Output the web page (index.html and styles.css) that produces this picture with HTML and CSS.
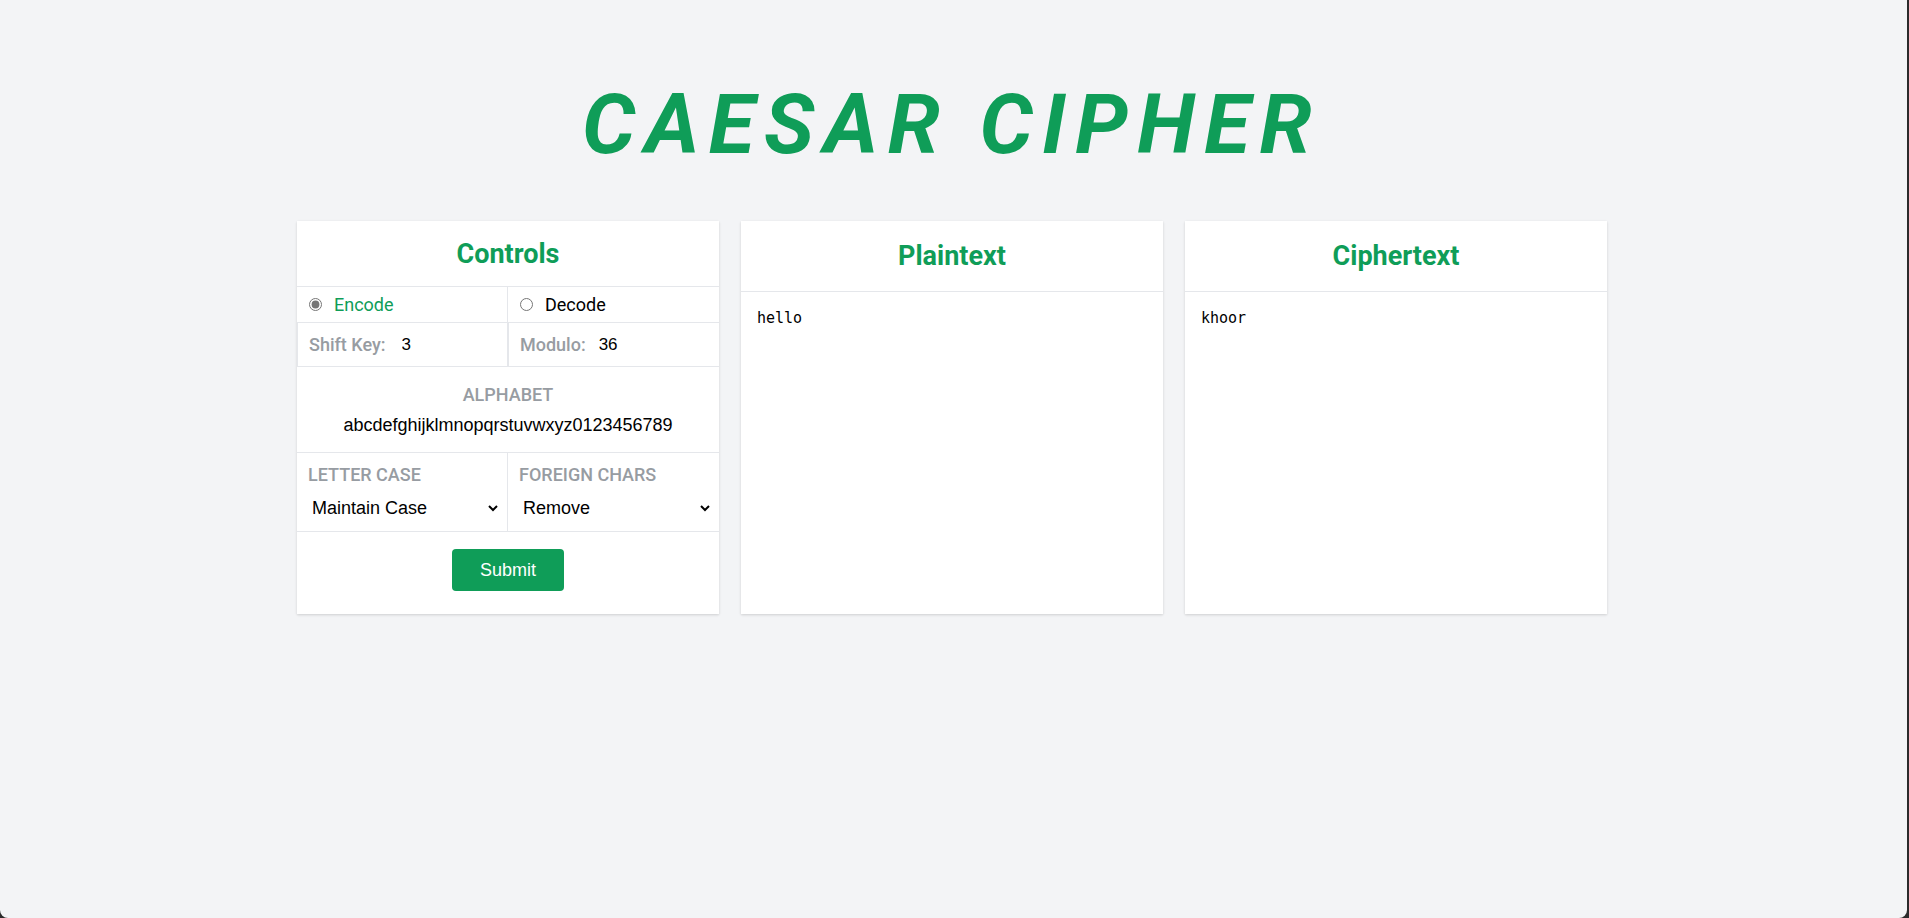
FILE: index.html
```html
<!DOCTYPE html>
<html lang="en">
<head>
<meta charset="utf-8">
<title>Caesar Cipher</title>
<link rel="stylesheet" href="styles.css">
</head>
<body>
<div class="page">
  <h1 class="title">CAESAR CIPHER</h1>
  <div class="grid">
    <section class="card">
      <header class="card-head head-controls"><h2>Controls</h2></header>
      <div class="row radios">
        <label class="cell radio-cell"><input type="radio" name="mode" checked><span class="mode-on">Encode</span></label>
        <label class="cell radio-cell"><input type="radio" name="mode"><span class="mode-off">Decode</span></label>
      </div>
      <div class="row nums">
        <div class="cell num-cell"><span class="lbl">Shift Key:</span><input class="num" type="text" value="3"></div>
        <div class="cell num-cell"><span class="lbl">Modulo:</span><input class="num num-tight" type="text" value="36"></div>
      </div>
      <div class="alpha">
        <div class="lbl">ALPHABET</div>
        <div class="alpha-val">abcdefghijklmnopqrstuvwxyz0123456789</div>
      </div>
      <div class="row selects">
        <div class="cell sel-cell">
          <div class="lbl">LETTER CASE</div>
          <select class="sel"><option>Maintain Case</option></select>
        </div>
        <div class="cell sel-cell">
          <div class="lbl">FOREIGN CHARS</div>
          <select class="sel"><option>Remove</option></select>
        </div>
      </div>
      <div class="submit-row"><button class="btn">Submit</button></div>
    </section>
    <section class="card">
      <header class="card-head head-text"><h2>Plaintext</h2></header>
      <textarea class="text-body">hello</textarea>
    </section>
    <section class="card">
      <header class="card-head head-text"><h2>Ciphertext</h2></header>
      <div class="text-body out">khoor</div>
    </section>
  </div>
</div>
</body>
</html>
```

FILE: styles.css
```css
html {
  background: #2b2b2b;
  height: 100%;
}
body {
  margin: 0 2px 0 0;
  height: 918px;
  background: #f3f4f6;
  border-radius: 0 0 8px 8px;
  overflow: hidden;
  font-family: Roboto, "Liberation Sans", sans-serif;
}
.page {
  display: flex;
  flex-direction: column;
  align-items: center;
  padding: 83px 3px 0 0;
}
.title {
  margin: 0 0 54px 0;
  padding-right: 1px;
  font-family: Roboto, sans-serif;
  font-weight: 700;
  font-style: italic;
  font-size: 84px;
  line-height: 84px;
  letter-spacing: 9.4px;
  color: #0f9d58;
}
.grid {
  display: grid;
  grid-template-columns: repeat(3, 422px);
  gap: 22px;
}
.card {
  background: #fff;
  box-shadow: 0 1px 3px rgba(0,0,0,0.10), 0 1px 2px rgba(0,0,0,0.06);
  display: flex;
  flex-direction: column;
}
.card-head {
  border-bottom: 1px solid #e5e7eb;
  display: flex;
  align-items: center;
  justify-content: center;
}
.card-head h2 {
  margin: 0;
  font-size: 27px;
  line-height: 30px;
  font-weight: 700;
  color: #0f9d58;
}
.head-controls { height: 65px; }
.head-text { height: 70px; }
.row {
  display: grid;
  grid-template-columns: 1fr 1fr;
  border-bottom: 1px solid #e5e7eb;
}
.cell {
  display: flex;
  align-items: center;
}
.radios { height: 35px; }
.radios .cell:first-child { border-right: 1px solid #e5e7eb; }
.radio-cell {
  padding-left: 12px;
  gap: 12px;
  font-size: 18px;
}
.radio-cell input {
  margin: 0;
  width: 13px;
  height: 13px;
  accent-color: #767676;
}
.mode-on { color: #0f9d58; }
.mode-off { color: #000; }
.nums { height: 43px; }
.num-cell {
  padding-left: 11px;
  border-left: 1px solid #e5e7eb;
}
.nums .cell:first-child { border-right: 1px solid #e5e7eb; }
.lbl {
  font-family: Roboto, sans-serif;
  font-weight: 500;
  font-size: 18px;
  line-height: 21px;
  color: #979ca2;
}
.num {
  border: 0;
  outline: 0;
  padding: 0;
  margin-left: 16px;
  width: 60px;
  font-family: "Liberation Sans", Arial, sans-serif;
  font-size: 17px;
  color: #000;
  background: transparent;
}
.num-tight { margin-left: 13px; }
.alpha {
  height: 86px;
  box-sizing: border-box;
  padding-top: 17px;
  border-bottom: 1px solid #e5e7eb;
  text-align: center;
  display: flex;
  flex-direction: column;
  align-items: center;
  gap: 10px;
}
.alpha-val {
  font-family: "Liberation Sans", Arial, sans-serif;
  font-size: 18px;
  line-height: 21px;
  color: #000;
}
.selects { height: 78px; }
.selects .cell:first-child { border-right: 1px solid #e5e7eb; }
.sel-cell {
  flex-direction: column;
  align-items: stretch;
  padding: 11px 6px 0 11px;
  gap: 11px;
}
.sel {
  height: 24px;
  border: 0;
  outline: 0;
  background: #fff;
  font-family: "Liberation Sans", Arial, sans-serif;
  font-size: 18px;
  color: #000;
  padding: 0;
}
.submit-row {
  height: 82px;
  box-sizing: border-box;
  display: flex;
  justify-content: center;
  align-items: flex-start;
  padding-top: 17px;
}
.btn {
  width: 112px;
  height: 42px;
  border: 0;
  border-radius: 4px;
  background: #0f9d58;
  color: #fff;
  font-family: "Liberation Sans", Arial, sans-serif;
  font-size: 18px;
}
.text-body {
  flex: 1;
  border: 0;
  outline: 0;
  resize: none;
  margin: 0;
  padding: 18px 16px 16px 16px;
  font-family: "DejaVu Sans Mono", monospace;
  font-size: 15px;
  line-height: 17px;
  color: #000;
  background: #fff;
}
```
